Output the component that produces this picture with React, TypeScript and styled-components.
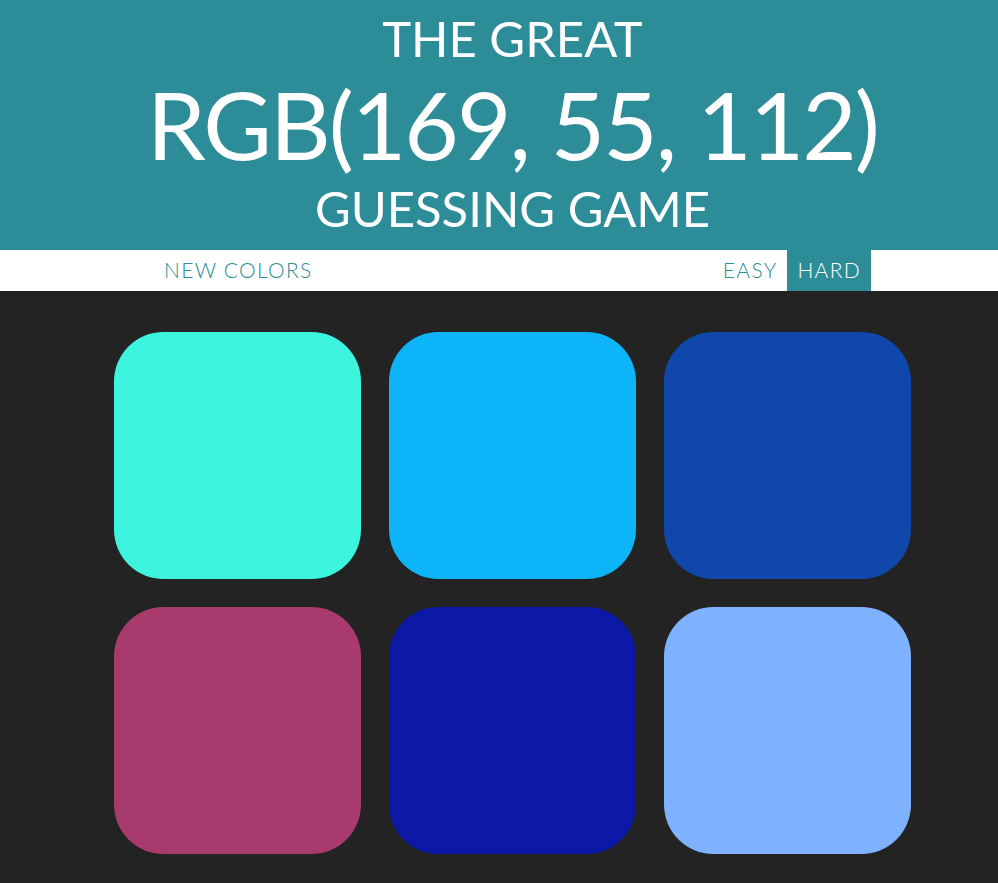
import React from "react";
import styled, { createGlobalStyle } from "styled-components";

const GlobalStyle = createGlobalStyle`
  html, body {
    margin: 0;
    padding: 0;
    background: #232323;
    overflow: hidden;
  }
  body {
    font-family: "Lato", "Open Sans", sans-serif;
  }
`;

const TEAL = "#2c8d99";

const Page = styled.div`
  width: 1025px;
`;

const Header = styled.h1`
  margin: 0;
  padding: 10px 0 15px;
  background: ${TEAL};
  color: #fff;
  text-align: center;
  text-transform: uppercase;
  font-weight: 400;
  font-size: 49px;
`;

const Line = styled.div<{ $height: number }>`
  line-height: ${(p) => p.$height}px;
  height: ${(p) => p.$height}px;
`;

const ColorDisplay = styled(Line)`
  font-size: 94px;
  letter-spacing: -2px;
`;

const Stripe = styled.div`
  background: #fff;
  height: 41px;
`;

const StripeInner = styled.div`
  width: 717px;
  height: 100%;
  margin: 0 auto;
  display: flex;
  align-items: stretch;
`;

const Button = styled.button<{ $selected?: boolean }>`
  border: none;
  background: ${(p) => (p.$selected ? TEAL : "none")};
  color: ${(p) => (p.$selected ? "#fff" : TEAL)};
  text-transform: uppercase;
  font-family: "Lato", sans-serif;
  font-weight: 300;
  font-size: 21px;
  letter-spacing: 1.3px;
  padding: 0 10px 2px;
  height: 100%;
  outline: none;
  cursor: pointer;
`;

const Spacer = styled.div`
  flex: 1;
`;

const Grid = styled.div`
  width: 797px;
  margin: 41px auto 0;
  display: grid;
  grid-template-columns: repeat(3, 1fr);
  column-gap: 28px;
  row-gap: 28px;
`;

const Square = styled.div<{ $color: string }>`
  aspect-ratio: 1 / 1;
  background: ${(p) => p.$color};
  border-radius: 20%;
`;

const colors = ["#3df5df", "#0db4f7", "#0f47aa", "#a83a6e", "#0b19a6", "#7fb2fe"];

export default function App() {
  return (
    <Page>
      <GlobalStyle />
      <Header>
        <Line $height={56}>The Great</Line>
        <ColorDisplay $height={115}>RGB(169, 55, 112)</ColorDisplay>
        <Line $height={54}>Guessing Game</Line>
      </Header>
      <Stripe>
        <StripeInner>
          <Button>New Colors</Button>
          <Spacer />
          <Button>Easy</Button>
          <Button $selected>Hard</Button>
        </StripeInner>
      </Stripe>
      <Grid>
        {colors.map((c, i) => (
          <Square key={i} $color={c} />
        ))}
      </Grid>
    </Page>
  );
}
